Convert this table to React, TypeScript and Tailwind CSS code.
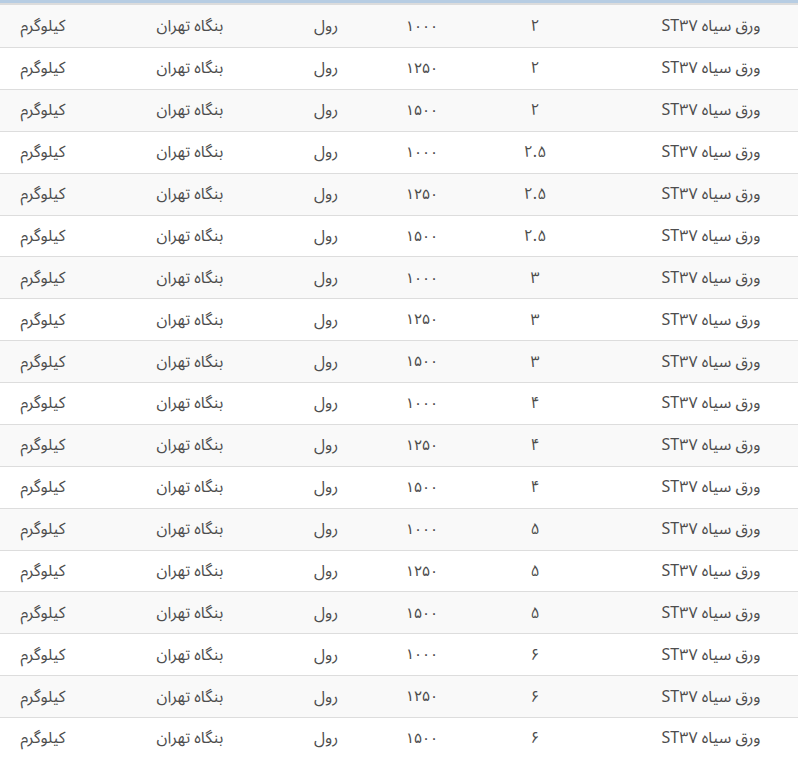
import React from "react";

const fa = (s: string) => s.replace(/[0-9]/g, (d) => "۰۱۲۳۴۵۶۷۸۹"[+d]);

const thick = ["2", "2", "2", "2.5", "2.5", "2.5", "3", "3", "3", "4", "4", "4", "5", "5", "5", "6", "6", "6"];
const widths = ["1000", "1250", "1500"];

export default function App() {
  return (
    <div
      dir="rtl"
      className="w-[798px] h-[774px] bg-white text-[#4d4d4d] text-[16px]"
      style={{ fontFamily: '"Noto Sans Arabic", "DejaVu Sans", sans-serif' }}
    >
      <div className="h-[3px] bg-[#b7cde3]" />
      {thick.map((t, i) => (
        <div
          key={i}
          className={
            "grid grid-cols-[174px_178px_48px_144px_128px_126px] items-center " +
            (i === 0 ? "h-[44px] border-t-2 border-[#dcdcdc] " : "h-[41.875px] border-t border-[#dddddd] ") +
            (i % 2 === 0 ? "bg-[#f9f9f9]" : "bg-white")
          }
        >
          <div className="text-center whitespace-nowrap">ورق سیاه ST۳۷</div>
          <div className="text-center whitespace-nowrap">{fa(t)}</div>
          <div className="text-center whitespace-nowrap text-[15px] font-['DejaVu_Sans',sans-serif]">{fa(widths[i % 3])}</div>
          <div className="text-center whitespace-nowrap">رول</div>
          <div className="text-center whitespace-nowrap">بنگاه تهران</div>
          <div className="text-center whitespace-nowrap pr-[40px]">کیلوگرم</div>
        </div>
      ))}
    </div>
  );
}
